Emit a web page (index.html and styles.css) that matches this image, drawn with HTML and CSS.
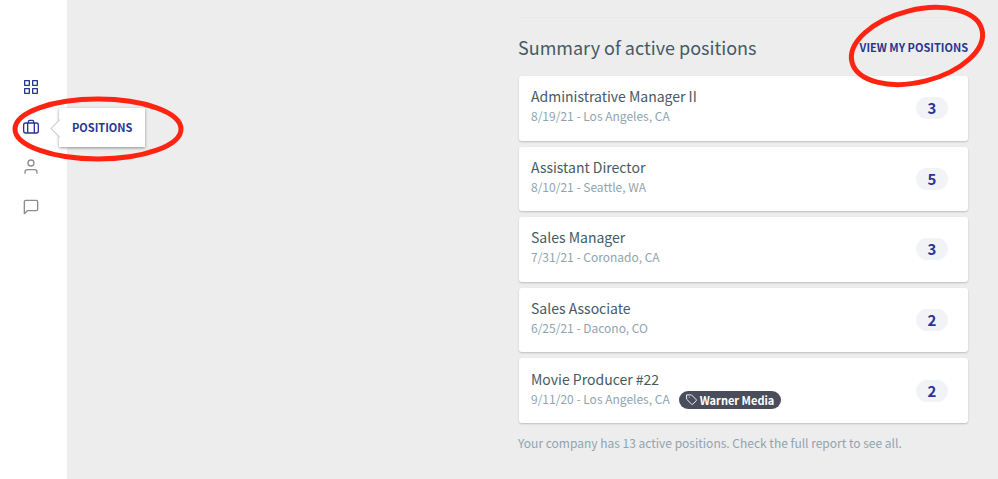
FILE: index.html
```html
<!DOCTYPE html>
<html lang="en">
<head>
<meta charset="UTF-8">
<meta name="viewport" content="width=device-width, initial-scale=1.0">
<title>Active positions</title>
<link rel="stylesheet" href="styles.css">
</head>
<body>

<!-- SIDEBAR -->
<nav class="sidebar">
<a class="nav-item active" href="#" aria-label="Dashboard">
<svg class="icon" viewBox="0 0 24 24"><path d="M2.500 2.500h7v7h-7zM14.500 2.500h7v7h-7zM2.500 14.500h7v7h-7zM14.500 14.500h7v7h-7z"/></svg>
</a>
<a class="nav-item active" href="#">
<svg class="icon" viewBox="0 0 24 24"><rect x="1" y="6" width="22" height="15" rx="3"/><path d="M7 21V6M17 21V6M8 6V4a2 2 0 0 1 2-2h4a2 2 0 0 1 2 2v2"/></svg>
<span class="tooltip">POSITIONS</span>
<svg class="mark mark-nav" viewBox="0 0 172 68"><ellipse cx="86" cy="34" rx="83" ry="30"/></svg>
</a>
<a class="nav-item" href="#" aria-label="Candidates">
<svg class="icon" viewBox="0 0 24 24"><circle cx="12" cy="6" r="4.500"/><path d="M3 22v-2a4 4 0 0 1 4-4h10a4 4 0 0 1 4 4v2"/></svg>
</a>
<a class="nav-item" href="#" aria-label="Messages">
<svg class="icon" viewBox="0 0 24 24"><path d="M22 15.500a2 2 0 0 1-2 2H6.500L2 22V4a2 2 0 0 1 2-2h16a2 2 0 0 1 2 2z"/></svg>
</a>
</nav>

<!-- SUMMARY -->
<main class="content">
<section class="summary">
<header class="summary-head">
<h2>Summary of active positions</h2>
<a class="view-all" href="#">VIEW MY POSITIONS
<svg class="mark mark-link" viewBox="0 0 138 84"><ellipse cx="69" cy="42" rx="67" ry="36" transform="rotate(-14 69 42)"/></svg>
</a>
</header>

<ul class="positions">
<li class="card">
<div>
<h3>Administrative Manager II</h3>
<p class="meta">8/19/21 - Los Angeles, CA</p>
</div>
<span class="count">3</span>
</li>
<li class="card">
<div>
<h3>Assistant Director</h3>
<p class="meta">8/10/21 - Seattle, WA</p>
</div>
<span class="count">5</span>
</li>
<li class="card">
<div>
<h3>Sales Manager</h3>
<p class="meta">7/31/21 - Coronado, CA</p>
</div>
<span class="count">3</span>
</li>
<li class="card">
<div>
<h3>Sales Associate</h3>
<p class="meta">6/25/21 - Dacono, CO</p>
</div>
<span class="count">2</span>
</li>
<li class="card">
<div>
<h3>Movie Producer #22</h3>
<p class="meta">9/11/20 - Los Angeles, CA
<span class="tag"><svg class="tag-icon" viewBox="0 0 24 24"><path d="M2 2h10l10 10a2 2 0 0 1 0 3l-7 7a2 2 0 0 1-3 0L2 12zM7 7h.1"/></svg>Warner Media</span>
</p>
</div>
<span class="count">2</span>
</li>
</ul>

<p class="note">Your company has 13 active positions. Check the full report to see all.</p>
</section>
</main>

</body>
</html>
```

FILE: styles.css
```css
*{
box-sizing:border-box;
}

body{
margin:0;
min-height:100vh;
display:flex;
background:#ededed;
color:#455a64;
font-family:"Noto Sans CJK SC","Open Sans",sans-serif;
}

h2,h3,p,ul{
margin:0;
padding:0;
font-weight:400;
}

a{
color:#283593;
text-decoration:none;
}

/* SIDEBAR */
.sidebar{
flex:0 0 67px;
display:flex;
flex-direction:column;
align-items:center;
gap:24px;
padding:79px 5px 0 0;
background:#fff;
}
.nav-item{
position:relative;
display:flex;
color:#8c8c8c;
}
.nav-item.active{
color:#283593;
}
.icon{
width:16px;
height:16px;
fill:none;
stroke:currentColor;
stroke-width:2;
stroke-linejoin:round;
}

/* TOOLTIP */
.tooltip{
position:absolute;
left:36px;
top:-11px;
padding:0 13px;
background:#fff;
box-shadow:0 1px 3px rgba(0,0,0,0.4);
font-size:11px;
font-weight:700;
line-height:39px;
}
.tooltip::before{
content:"";
position:absolute;
left:-6px;
top:14px;
width:12px;
height:12px;
background:#fff;
border:solid #ccc;
border-width:0 0 1px 1px;
transform:rotate(45deg);
}

/* RED MARKS */
.mark{
position:absolute;
overflow:visible;
fill:none;
stroke:#ff2412;
stroke-width:5;
pointer-events:none;
}
.mark-nav{
left:-11px;
top:-24px;
width:172px;
height:68px;
}
.mark-link{
right:-18px;
top:-35px;
width:138px;
height:84px;
}

/* SUMMARY */
.content{
flex:1;
display:flex;
justify-content:flex-end;
padding:17px 30px 20px;
}
.summary{
flex:0 1 450px;
}
.summary-head{
display:flex;
justify-content:space-between;
align-items:center;
height:59px;
border-top:1px solid #e9e9e9;
}
h2{
font-size:18px;
line-height:24px;
}
.view-all{
position:relative;
font-size:11px;
font-weight:700;
line-height:16px;
}

/* CARDS */
.positions{
display:grid;
grid-auto-rows:1fr;
gap:6px;
min-height:347px;
list-style:none;
}
.card{
display:flex;
justify-content:space-between;
align-items:center;
padding:0 20px 0 12px;
margin-left:1px;
background:#fff;
border-radius:3px;
box-shadow:0 1px 2px rgba(0,0,0,0.2);
}
h3{
font-size:14px;
line-height:20px;
}
.meta{
display:flex;
align-items:center;
height:24px;
padding-bottom:4px;
color:#90a4ae;
font-size:12px;
line-height:20px;
}
.count{
width:32px;
border-radius:11px;
background:#f1f3f6;
color:#283593;
font-size:15px;
font-weight:700;
line-height:22px;
text-align:center;
}

/* TAG */
.tag{
display:flex;
align-items:center;
gap:3px;
margin:2px 0 0 9px;
padding:0 7px;
border-radius:9px;
background:#4a4e5c;
color:#fff;
font-size:11px;
font-weight:700;
line-height:18px;
}
.tag-icon{
width:11px;
height:11px;
fill:none;
stroke:currentColor;
stroke-width:2;
stroke-linejoin:round;
stroke-linecap:round;
}

.note{
margin-top:10px;
color:#90a4ae;
font-size:12px;
line-height:20px;
}
```
